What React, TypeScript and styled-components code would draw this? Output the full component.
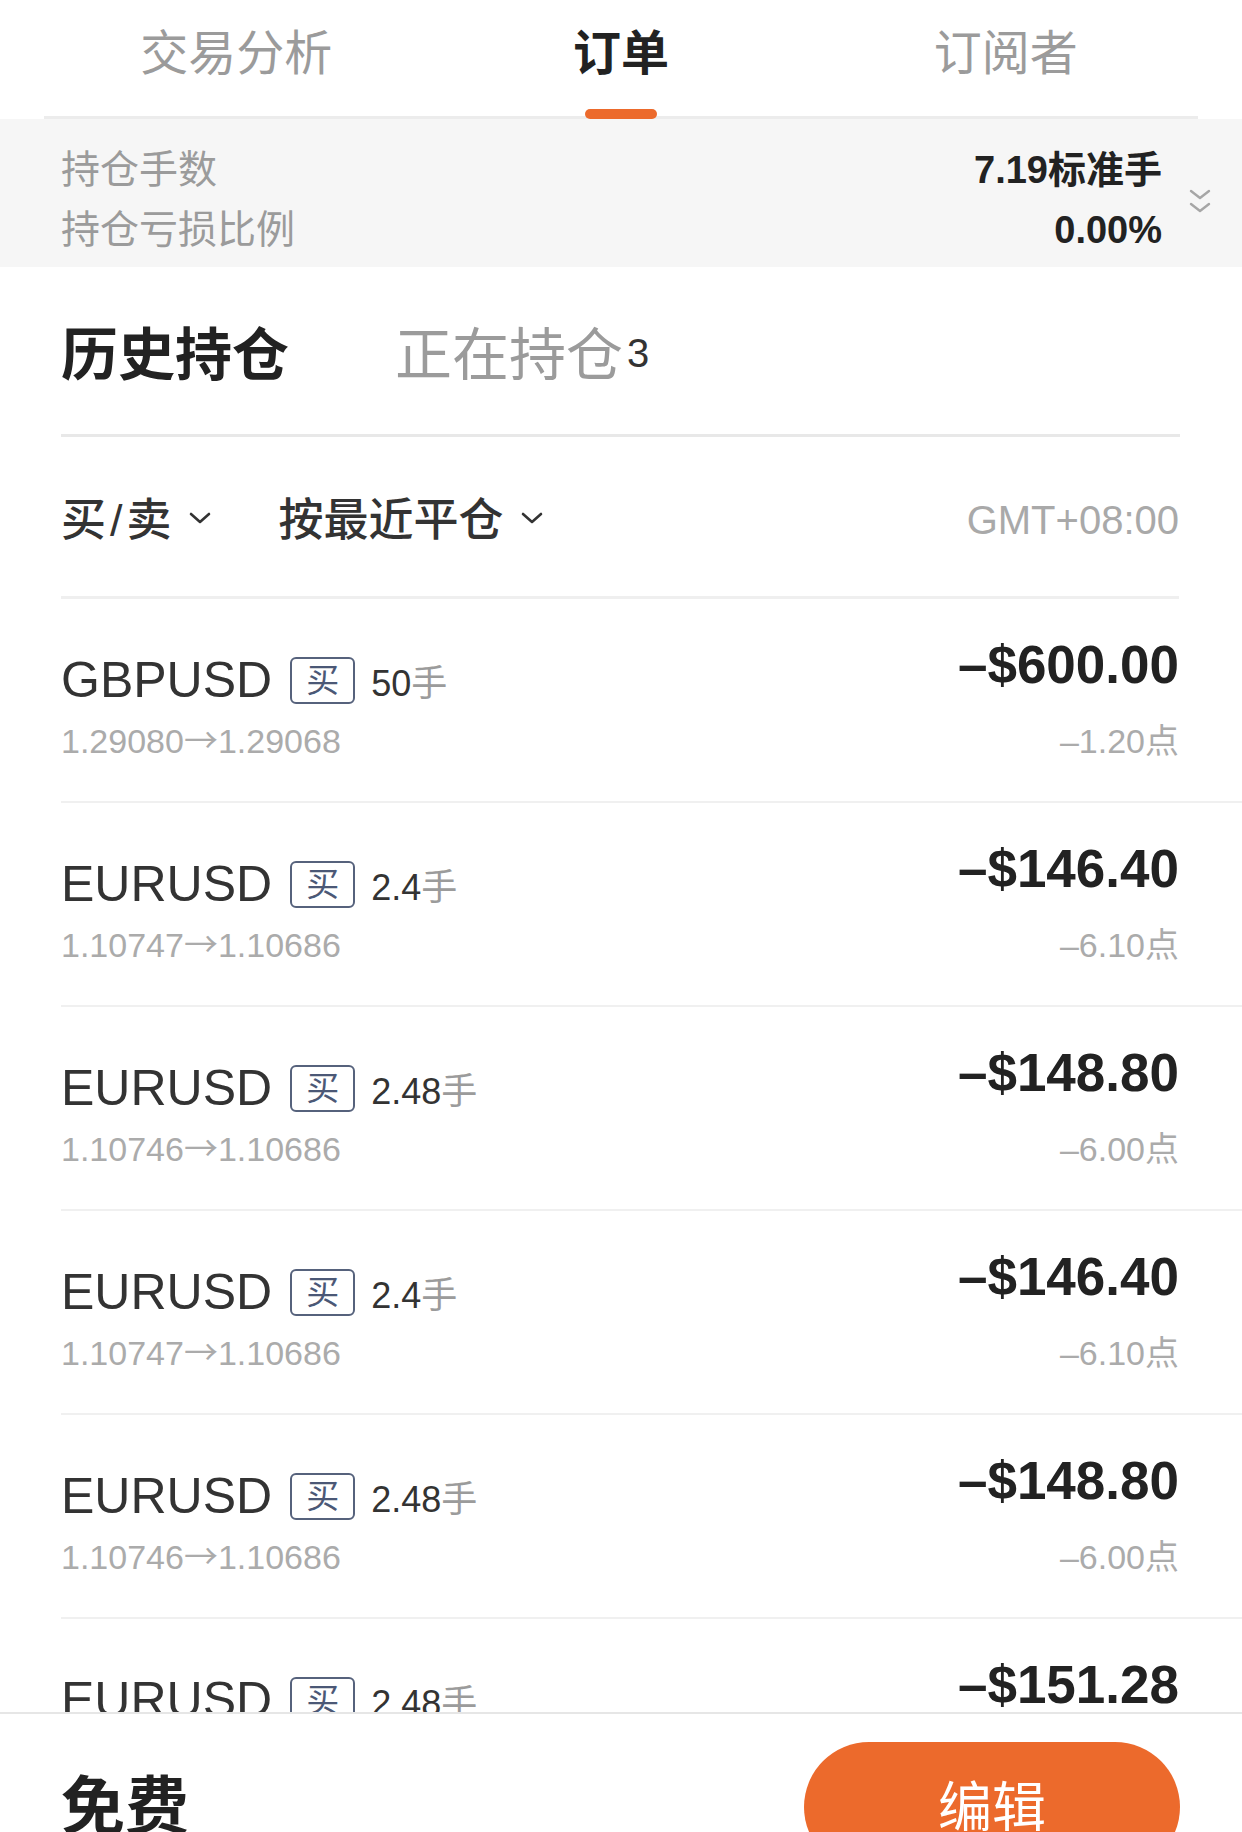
import React from "react";
import styled, { createGlobalStyle, css } from "styled-components";

const FONT = `"Liberation Sans", "Noto Sans CJK SC", sans-serif`;
const ORANGE = "#ec6a2c";

type TradeT = {
  symbol: string;
  side: string;
  lots: string;
  open: string;
  close: string;
  profit: string;
  points: string;
};

const trades: Array<TradeT> = [
  { symbol: "GBPUSD", side: "买", lots: "50", open: "1.29080", close: "1.29068", profit: "–$600.00", points: "–1.20" },
  { symbol: "EURUSD", side: "买", lots: "2.4", open: "1.10747", close: "1.10686", profit: "–$146.40", points: "–6.10" },
  { symbol: "EURUSD", side: "买", lots: "2.48", open: "1.10746", close: "1.10686", profit: "–$148.80", points: "–6.00" },
  { symbol: "EURUSD", side: "买", lots: "2.4", open: "1.10747", close: "1.10686", profit: "–$146.40", points: "–6.10" },
  { symbol: "EURUSD", side: "买", lots: "2.48", open: "1.10746", close: "1.10686", profit: "–$148.80", points: "–6.00" },
  { symbol: "EURUSD", side: "买", lots: "2.48", open: "1.10747", close: "1.10684", profit: "–$151.28", points: "–6.30" },
];

const tabs = ["交易分析", "订单", "订阅者"];

const ChevronDown = ({ color = "#333" }: { color?: string }) => (
  <svg width="22" height="12" viewBox="0 0 22 12" fill="none">
    <polyline points="2,2 11,10 20,2" stroke={color} strokeWidth="2.6" strokeLinecap="round" strokeLinejoin="round" />
  </svg>
);

const DoubleChevron = () => (
  <svg width="24" height="26" viewBox="0 0 24 26" fill="none">
    <polyline points="3,2 12,9 21,2" stroke="#a6a6a6" strokeWidth="2.4" strokeLinecap="round" strokeLinejoin="round" />
    <polyline points="3,15 12,22 21,15" stroke="#a6a6a6" strokeWidth="2.4" strokeLinecap="round" strokeLinejoin="round" />
  </svg>
);

const App = () => {
  return (
    <PageS>
      <GlobalStyle />
      <TabBarS>
        {tabs.map((name, index) => (
          <TabS key={index} $active={index === 1}>
            {name}
          </TabS>
        ))}
      </TabBarS>

      <SummaryS>
        <SummaryGridS>
          <SummaryLabelS>持仓手数</SummaryLabelS>
          <SummaryValueS>7.19标准手</SummaryValueS>
          <SummaryLabelS>持仓亏损比例</SummaryLabelS>
          <SummaryValueS>0.00%</SummaryValueS>
        </SummaryGridS>
        <ExpandS>
          <DoubleChevron />
        </ExpandS>
      </SummaryS>

      <HoldTabsS>
        <HoldTabS $active>历史持仓</HoldTabS>
        <HoldTabS>
          正在持仓
          <CountS>3</CountS>
        </HoldTabS>
      </HoldTabsS>

      <FilterBarS>
        <FilterBtnS>
          <span>
            买<SlashS>/</SlashS>卖
          </span>
          <ChevronDown />
        </FilterBtnS>
        <FilterBtnS>
          按最近平仓
          <ChevronDown />
        </FilterBtnS>
        <ZoneS>GMT+08:00</ZoneS>
      </FilterBarS>

      <ListS>
        {trades.map((t, index) => (
          <RowS key={index}>
            <LeftColS>
              <SymbolLineS>
                <SymbolS>{t.symbol}</SymbolS>
                <SideBadgeS>{t.side}</SideBadgeS>
                <LotsS>
                  {t.lots}
                  <UnitS>手</UnitS>
                </LotsS>
              </SymbolLineS>
              <SubLineS>
                {t.open}
                <ArrowS>→</ArrowS>
                {t.close}
              </SubLineS>
            </LeftColS>
            <RightColS>
              <ProfitS>{t.profit}</ProfitS>
              <SubLineS>{t.points}点</SubLineS>
            </RightColS>
          </RowS>
        ))}
      </ListS>

      <FooterS>
        <PriceS>免费</PriceS>
        <EditBtnS>编辑</EditBtnS>
      </FooterS>
    </PageS>
  );
};

const GlobalStyle = createGlobalStyle`
  html, body {
    margin: 0;
    padding: 0;
    background: #fff;
  }
  body {
    font-family: ${FONT};
    -webkit-font-smoothing: antialiased;
  }
  * {
    box-sizing: border-box;
  }
`;

const PageS = styled.div`
  display: flex;
  flex-direction: column;
  width: 1242px;
  height: 1832px;
  overflow: hidden;
  background: #fff;
`;

const TabBarS = styled.nav`
  display: grid;
  grid-template-columns: repeat(3, 1fr);
  height: 119px;
  margin: 0 44px;
  border-bottom: 3px solid #ececec;
  flex-shrink: 0;
`;

const TabS = styled.div<{ $active?: boolean }>`
  position: relative;
  display: flex;
  justify-content: center;
  padding-top: 30px;
  font-size: 48px;
  line-height: 48px;
  font-weight: ${({ $active }) => ($active ? 700 : 400)};
  color: ${({ $active }) => ($active ? "#222" : "#9b9b9b")};
  ${({ $active }) =>
    $active &&
    css`
      &::after {
        content: "";
        position: absolute;
        left: 50%;
        bottom: -3px;
        width: 72px;
        height: 10px;
        margin-left: -36px;
        border-radius: 5px;
        background: ${ORANGE};
      }
    `}
`;

const SummaryS = styled.section`
  display: flex;
  align-items: center;
  flex-shrink: 0;
  height: 148px;
  padding: 14px 30px 0 61px;
  background: #f6f6f6;
`;

const SummaryGridS = styled.div`
  flex: 1;
  display: grid;
  grid-template-columns: 1fr auto;
  line-height: 60px;
  font-size: 39px;
`;

const SummaryLabelS = styled.div`
  color: #9b9b9b;
`;

const SummaryValueS = styled.div`
  text-align: right;
  font-size: 38px;
  font-weight: 700;
  color: #222;
`;

const ExpandS = styled.div`
  display: flex;
  margin: 4px 0 0 26px;
`;

const HoldTabsS = styled.div`
  display: flex;
  gap: 106px;
  flex-shrink: 0;
  height: 170px;
  margin: 0 62px 0 61px;
  padding: 60px 0 51px;
  border-bottom: 3px solid #e8e8e8;
`;

const HoldTabS = styled.div<{ $active?: boolean }>`
  display: flex;
  align-items: center;
  font-size: 57px;
  line-height: 56px;
  font-weight: ${({ $active }) => ($active ? 700 : 400)};
  color: ${({ $active }) => ($active ? "#222" : "#9b9b9b")};
`;

const CountS = styled.span`
  margin: -4px 0 0 4px;
  font-size: 40px;
  line-height: 1;
  font-weight: 400;
  color: #333;
`;

const FilterBarS = styled.div`
  display: flex;
  align-items: center;
  flex-shrink: 0;
  height: 162px;
  margin: 0 63px 0 61px;
  padding-top: 7px;
  border-bottom: 3px solid #efefef;
`;

const FilterBtnS = styled.div`
  display: flex;
  align-items: center;
  gap: 17px;
  margin-right: 68px;
  font-size: 45px;
  line-height: 45px;
  font-weight: 500;
  color: #333;

  svg {
    margin-top: -4px;
  }
`;

const SlashS = styled.span`
  margin: 0 4px;
`;

const ZoneS = styled.div`
  margin-left: auto;
  font-size: 40px;
  color: #a9a9a9;
`;

const ListS = styled.div`
  flex: 1;
  min-height: 0;
  overflow: hidden;
`;

const RowS = styled.div`
  display: flex;
  justify-content: space-between;
  height: 204px;
  margin-left: 61px;
  padding-right: 63px;
  border-bottom: 2px solid #f0f0f0;
`;

const LeftColS = styled.div`
  display: flex;
  flex-direction: column;
  gap: 9px;
  padding-top: 51px;
`;

const RightColS = styled.div`
  display: flex;
  flex-direction: column;
  align-items: flex-end;
  gap: 26px;
  padding-top: 36px;
`;

const SymbolLineS = styled.div`
  display: flex;
  align-items: center;
  height: 60px;
`;

const SymbolS = styled.span`
  font-size: 50px;
  color: #333;
`;

const SideBadgeS = styled.span`
  display: inline-flex;
  align-items: center;
  justify-content: center;
  width: 65px;
  height: 47px;
  margin-left: 18px;
  border: 2.5px solid #56627c;
  border-radius: 6px;
  font-size: 33px;
  line-height: 1;
  color: #4b5876;
`;

const LotsS = styled.span`
  margin-left: 16px;
  font-size: 36px;
  color: #333;
`;

const UnitS = styled.span`
  color: #9b9b9b;
`;

const SubLineS = styled.div`
  font-size: 34px;
  line-height: 40px;
  color: #ababab;
`;

const ArrowS = styled.span`
  font-family: "Noto Sans CJK SC", sans-serif;
`;

const ProfitS = styled.div`
  font-size: 53px;
  line-height: 60px;
  font-weight: 700;
  color: #222;
`;

const FooterS = styled.footer`
  display: flex;
  align-items: flex-start;
  justify-content: space-between;
  flex-shrink: 0;
  height: 120px;
  padding: 28px 62px 0 61px;
  overflow: hidden;
  border-top: 2px solid #e6e6e6;
  background: #fff;
`;

const PriceS = styled.div`
  height: 130px;
  line-height: 130px;
  font-size: 64px;
  font-weight: 700;
  color: #222;
`;

const EditBtnS = styled.button`
  flex-shrink: 0;
  width: 376px;
  height: 130px;
  border: none;
  border-radius: 65px;
  background: ${ORANGE};
  color: #fff;
  font-family: ${FONT};
  font-size: 54px;
  line-height: 130px;
`;

export default App;
